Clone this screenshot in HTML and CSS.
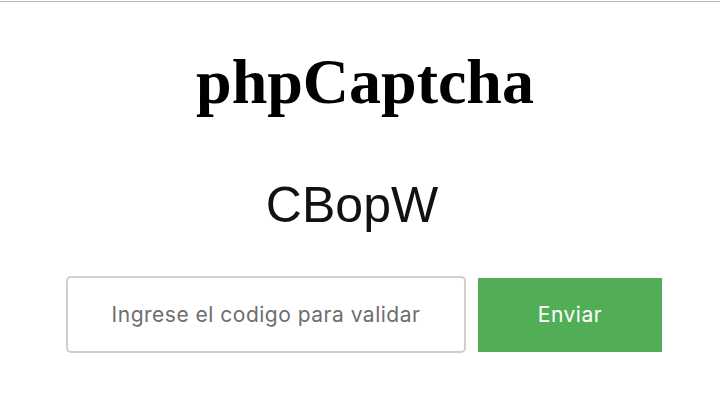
FILE: index.html
```html
<!DOCTYPE html>
<html lang="es">
<head>
<meta charset="utf-8">
<title>phpCaptcha</title>
<link rel="stylesheet" href="styles.css">
</head>
<body>
<div class="topline"></div>
<main class="page">
  <h1 class="title">phpCaptcha</h1>
  <div class="captcha">CBopW</div>
  <form class="form" onsubmit="return false;">
    <input class="code" type="text" placeholder="Ingrese el codigo para validar">
    <button class="send" type="submit">Enviar</button>
  </form>
</main>
</body>
</html>
```
FILE: styles.css
```css
html, body {
  margin: 0;
  padding: 0;
  background: #ffffff;
}

.topline {
  height: 1px;
  margin-top: 1px;
  background: #b3b3b3;
}

.page {
  display: flex;
  flex-direction: column;
  padding-top: 44px;
}

.title {
  margin: 0;
  padding-left: 10px;
  text-align: center;
  font-family: "Liberation Serif", "Times New Roman", serif;
  font-weight: bold;
  font-size: 64px;
  line-height: 72px;
  color: #000;
}

.captcha {
  margin-top: 57px;
  padding-right: 16px;
  text-align: center;
  font-family: "Liberation Sans", Arial, sans-serif;
  font-size: 50px;
  line-height: 60px;
  color: #111;
  filter: blur(0.4px);
}

.form {
  margin: 41px 0 0 66px;
  display: flex;
  align-items: center;
  gap: 12px;
}

.code {
  box-sizing: border-box;
  width: 400px;
  height: 77px;
  margin: 0;
  border: 2px solid #cfcfcf;
  border-radius: 5px;
  background: #fff;
  text-align: center;
  font-family: "Inter", "Liberation Sans", sans-serif;
  font-size: 21px;
  letter-spacing: 0.5px;
  color: #333;
  outline: none;
}

.code::placeholder {
  color: #6e6e6e;
  opacity: 1;
}

.send {
  box-sizing: border-box;
  width: 184px;
  height: 74px;
  margin: 0;
  border: none;
  border-radius: 0;
  background: #51ae56;
  color: #ffffff;
  font-family: "Inter", "Liberation Sans", sans-serif;
  font-size: 21px;
  letter-spacing: 0.5px;
  cursor: pointer;
}
```
